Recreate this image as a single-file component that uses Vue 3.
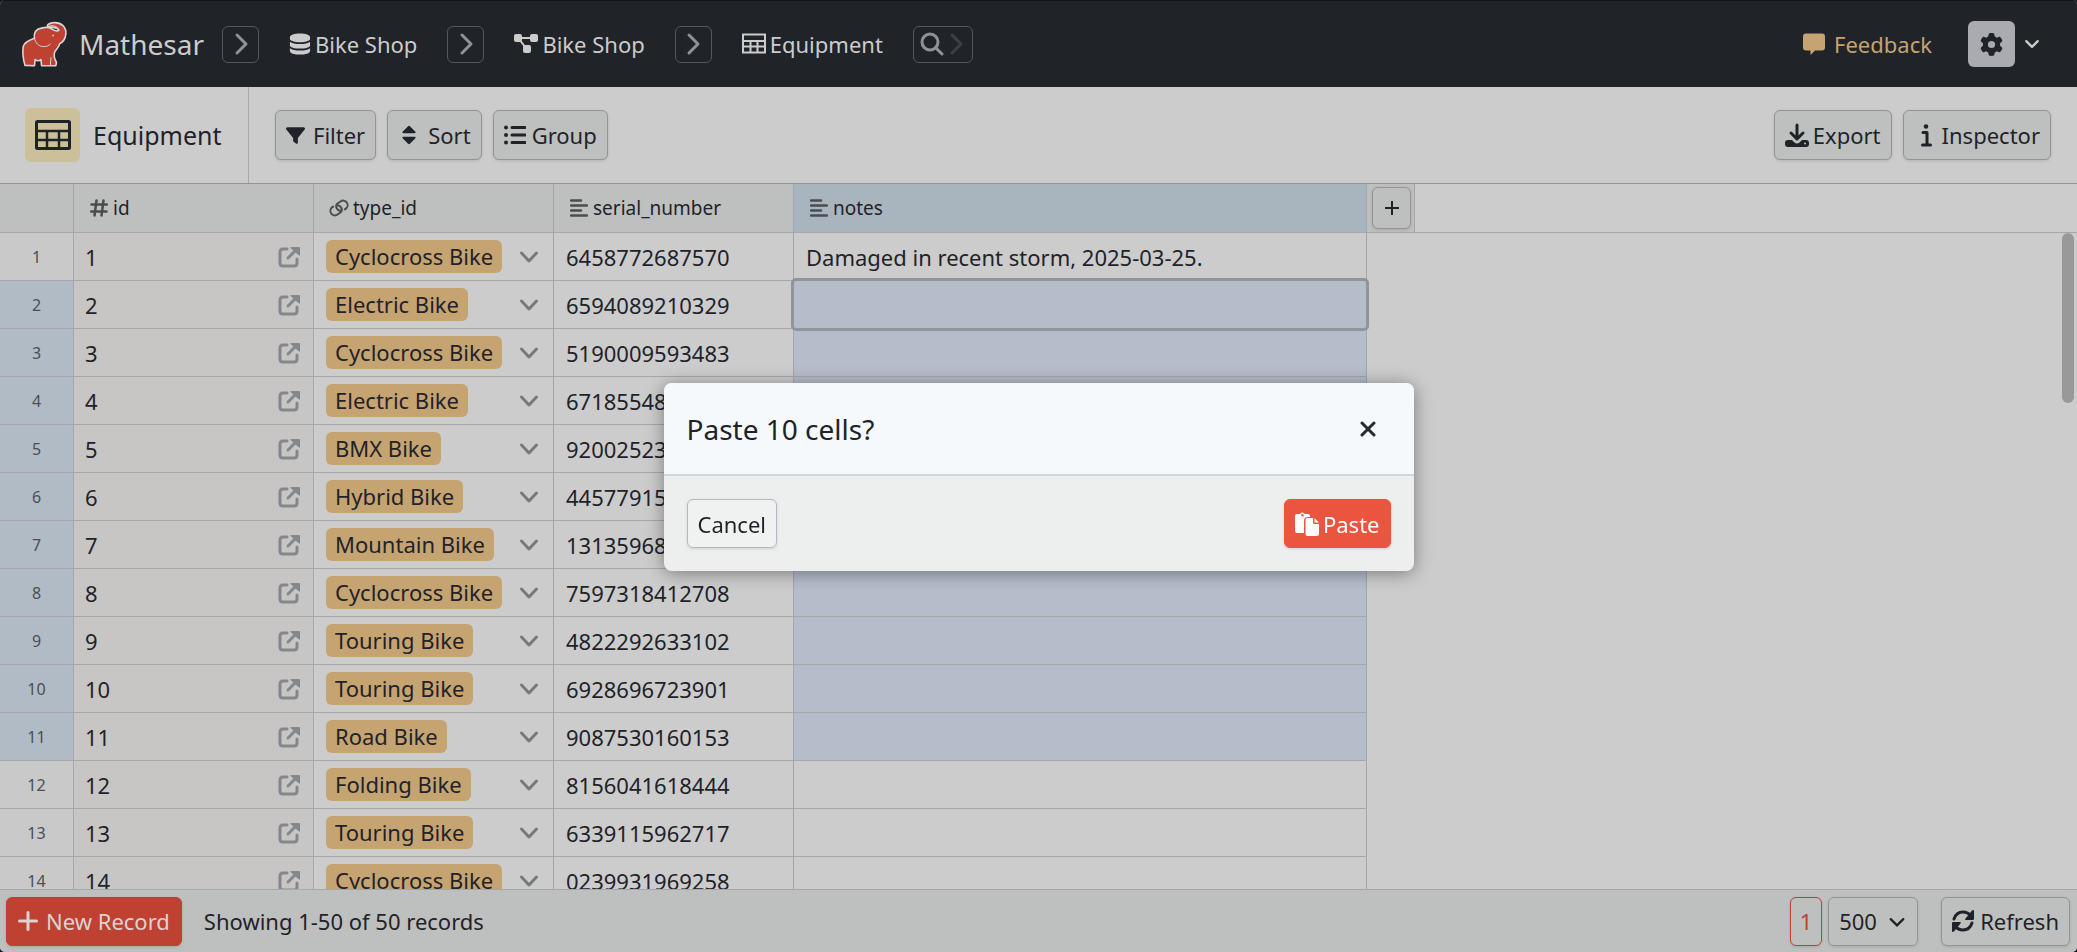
<script setup>
import { ref } from 'vue'

const types = [
  'Cyclocross Bike', 'Electric Bike', 'Cyclocross Bike', 'Electric Bike', 'BMX Bike',
  'Hybrid Bike', 'Mountain Bike', 'Cyclocross Bike', 'Touring Bike', 'Touring Bike',
  'Road Bike', 'Folding Bike', 'Touring Bike', 'Cyclocross Bike',
]
const serials = [
  '6458772687570', '6594089210329', '5190009593483', '6718554819203', '9200252317460',
  '4457791583216', '1313596840275', '7597318412708', '4822292633102', '6928696723901',
  '9087530160153', '8156041618444', '6339115962717', '0239931969258',
]
const rows = types.map((type, i) => ({
  id: i + 1,
  type,
  serial: serials[i],
  notes: i === 0 ? 'Damaged in recent storm, 2025-03-25.' : '',
  selected: i >= 1 && i <= 10,
  active: i === 1,
}))
const pageSize = ref('500')
</script>

<template>
  <div class="app">
    <header class="topbar">
      <a class="brand" href="#">
        <svg class="logo" viewBox="34 30 144 142" aria-hidden="true">
          <path d="M46 167C41 152 38 130 40 110C43 96 57 89 75 83C72 66 80 54 96 52C108 49 120 49 128 54C136 60 147 63 150 58C148 48 128 50 116 47C112 41 122 36 135 35C158 34 174 49 172 70C170 87 162 96 153 100C151 109 145 116 138 124C134 134 136 146 143 158L141 168H97L95 149C90 153 82 153 77 149L75 168Z" fill="#be4132" stroke="#d6d6d6" stroke-width="5" stroke-linejoin="round" />
          <path d="M75 83C78 98 88 108 101 109C113 110 122 105 124 101M120 46C133 41 148 47 151 59M126 143L124 167" fill="none" stroke="#d6d6d6" stroke-width="3" stroke-linecap="round" />
          <path d="M129 75l7-4-3 8z" fill="#e8e8e8" />
        </svg>
        <span>Mathesar</span>
      </a>
      <button class="crumb-btn" aria-label="Choose database">
        <svg viewBox="0 0 20 24"><path d="M6 3l9 9-9 9" /></svg>
      </button>
      <a class="crumb" href="#">
        <svg class="i22" viewBox="0 0 22 24" fill="currentColor" aria-hidden="true">
          <path d="M0 4.500C0 2 5 .500 11 .500S22 2 22 4.500v2C22 8.500 17 10 11 10S0 8.500 0 6.500zM0 9.500c2 1.700 6 2.500 11 2.500s9-.8 11-2.500v4c0 2-5 3.500-11 3.500S0 15.500 0 13.500zM0 16.500C2 18.200 6 19 11 19s9-.8 11-2.500v3c0 2.500-5 4-11 4s-11-1.500-11-4z" />
        </svg>
        Bike Shop
      </a>
      <button class="crumb-btn" aria-label="Choose schema">
        <svg viewBox="0 0 20 24"><path d="M6 3l9 9-9 9" /></svg>
      </button>
      <a class="crumb" href="#">
        <svg class="i24" viewBox="0 0 24 24" fill="currentColor" aria-hidden="true">
          <rect x="0" y="2" width="8" height="8" rx="2" /><rect x="16" y="2" width="8" height="8" rx="2" /><rect x="9" y="13" width="8" height="8" rx="2" />
          <path d="M6 6h12M5 7l7 9" stroke="currentColor" stroke-width="2" />
        </svg>
        Bike Shop
      </a>
      <button class="crumb-btn" aria-label="Choose table">
        <svg viewBox="0 0 20 24"><path d="M6 3l9 9-9 9" /></svg>
      </button>
      <a class="crumb" href="#">
        <svg class="i24" viewBox="0 0 24 24" fill="none" stroke="currentColor" stroke-width="2" aria-hidden="true">
          <path d="M1 2.500h22v18H1zM1 9h22M1 14.500h22M8.500 9v11M15.500 9v11" />
        </svg>
        Equipment
      </a>
      <button class="crumb-btn finder" aria-label="Find a record">
        <svg class="lens" viewBox="0 0 24 24"><circle cx="10" cy="10" r="8" /><path d="M16 16l6 6" /></svg>
        <svg class="dim" viewBox="0 0 20 24"><path d="M6 3l9 9-9 9" /></svg>
      </button>
      <span class="grow"></span>
      <a class="feedback" href="#">
        <svg class="i22" viewBox="0 0 22 22" fill="currentColor" aria-hidden="true">
          <path d="M3 .500h16a3 3 0 0 1 3 3v11a3 3 0 0 1-3 3h-7L7.500 22v-4.500H3a3 3 0 0 1-3-3v-11a3 3 0 0 1 3-3z" />
        </svg>
        Feedback
      </a>
      <button class="settings" aria-label="Settings">
        <span class="gear">
          <svg viewBox="0 0 512 512" fill="currentColor"><path d="M495.900 166.600c3.200 8.700 .5 18.400-6.400 24.600l-43.300 39.400c1.100 8.300 1.700 16.800 1.700 25.400s-.6 17.100-1.700 25.400l43.300 39.400c6.900 6.200 9.600 15.900 6.400 24.600c-4.400 11.900-9.700 23.300-15.800 34.300l-4.700 8.100c-6.600 11-14 21.400-22.100 31.200c-5.900 7.200-15.700 9.600-24.500 6.800l-55.700-17.700c-13.400 10.300-28.200 18.900-44 25.400l-12.500 57.100c-2 9.100-9 16.300-18.200 17.800c-13.800 2.300-28 3.500-42.500 3.500s-28.700-1.200-42.500-3.500c-9.200-1.500-16.200-8.700-18.200-17.800l-12.500-57.100c-15.800-6.500-30.600-15.100-44-25.400L83.100 425.900c-8.800 2.800-18.600 .3-24.500-6.800c-8.100-9.800-15.500-20.200-22.100-31.200l-4.700-8.100c-6.100-11-11.400-22.400-15.800-34.300c-3.200-8.700-.5-18.400 6.400-24.600l43.300-39.400C64.600 273.100 64 264.600 64 256s.6-17.100 1.700-25.400L22.400 191.200c-6.900-6.200-9.600-15.900-6.400-24.600c4.400-11.900 9.700-23.300 15.800-34.300l4.700-8.100c6.600-11 14-21.400 22.100-31.200c5.900-7.200 15.700-9.600 24.500-6.800l55.700 17.700c13.400-10.300 28.200-18.900 44-25.400l12.500-57.100c2-9.100 9-16.300 18.200-17.800C227.300 1.200 241.500 0 256 0s28.700 1.200 42.500 3.500c9.200 1.500 16.200 8.700 18.200 17.800l12.500 57.100c15.800 6.500 30.600 15.100 44 25.400l55.700-17.700c8.800-2.800 18.600-.3 24.500 6.800c8.100 9.800 15.500 20.200 22.100 31.200l4.700 8.100c6.100 11 11.400 22.400 15.800 34.300zM256 336a80 80 0 1 0 0-160 80 80 0 1 0 0 160z" /></svg>
        </span>
        <svg class="caret" viewBox="0 0 14 14"><path d="M2 4.500l5 5 5-5" /></svg>
      </button>
    </header>

    <section class="toolbar">
      <div class="title">
        <span class="title-icon">
          <svg viewBox="0 0 36 30" fill="none" stroke="currentColor" aria-hidden="true">
            <rect x="1.500" y="1.500" width="33" height="27" rx="1" stroke-width="3" />
            <path d="M1 11h34M1 20h34M12 11v17M24 11v17" stroke-width="2.500" />
          </svg>
        </span>
        <h1>Equipment</h1>
      </div>
      <div class="group">
        <button class="btn">
          <svg class="i19" viewBox="0 0 512 512" fill="currentColor"><path d="M3.900 54.900C10.500 40.900 24.500 32 40 32l432 0c15.500 0 29.500 8.900 36.100 22.900s4.600 30.500-5.200 42.500L320 320.900 320 448c0 12.100-6.800 23.200-17.700 28.600s-23.800 4.300-33.500-3l-64-48c-8.100-6-12.800-15.500-12.800-25.600l0-79.100L9 97.300C-.7 85.400-2.800 68.800 3.900 54.900z" /></svg>
          Filter
        </button>
        <button class="btn">
          <svg class="i22" viewBox="0 0 22 24" fill="currentColor"><path d="M10 2.500q1-1 2 0l6 6q1 1.500-1 1.500H5q-2 0-1-1.500zM5 14h12q2 0 1 1.500l-6 6q-1 1-2 0l-6-6Q3 14 5 14z" /></svg>
          Sort
        </button>
        <button class="btn snug">
          <svg class="i22" viewBox="0 0 22 20"><g fill="currentColor"><circle cx="2" cy="2.500" r="2" /><circle cx="2" cy="10" r="2" /><circle cx="2" cy="17.500" r="2" /></g><path d="M8 2.500h13M8 10h13M8 17.500h13" stroke="currentColor" stroke-width="3" stroke-linecap="round" /></svg>
          Group
        </button>
      </div>
      <span class="grow"></span>
      <div class="group">
        <button class="btn tight">
          <svg class="i24" viewBox="0 0 24 24"><path d="M12 2v12M6 10l6 6 6-6" fill="none" stroke="currentColor" stroke-width="3" stroke-linecap="round" stroke-linejoin="round" /><path fill="currentColor" fill-rule="evenodd" d="M3 17h4l2.500 2.500q2.500 2 5 0L17 17h4q3 0 3 3v1q0 3-3 3H3q-3 0-3-3v-1q0-3 3-3zM20 19.500a1 1 0 1 0 0 2 1 1 0 0 0 0-2z" /></svg>
          Export
        </button>
        <button class="btn tight">
          <svg class="i24" viewBox="0 0 24 24"><circle cx="12" cy="3.500" r="2.300" fill="currentColor" /><path d="M9 9.500h4v12M8.500 22h8" fill="none" stroke="currentColor" stroke-width="3" stroke-linecap="round" stroke-linejoin="round" /></svg>
          Inspector
        </button>
      </div>
    </section>

    <main class="sheet">
      <table>
        <colgroup>
          <col class="c-num" /><col class="c-std" /><col class="c-std" /><col class="c-std" /><col class="c-notes" /><col class="c-add" /><col />
        </colgroup>
        <thead>
          <tr>
            <th aria-label="Row"></th>
            <th><span class="col"><svg viewBox="0 0 18 18"><path d="M6.500 1.500l-2 15M13.500 1.500l-2 15M1.500 5.500h15.500M1 12.500h15.500" stroke-width="2.500" /></svg>id</span></th>
            <th><span class="col link"><svg viewBox="0 0 18 18"><g transform="rotate(-35 9 9)" stroke-width="2"><path d="M9.500 12.500C6 11 6 5.500 10 4.500h4a4.500 4.500 0 0 1 0 9h-1" /><path d="M8.500 5.500C12 7 12 12.500 8 13.500H4a4.500 4.500 0 0 1 0-9h1" /></g></svg>type_id</span></th>
            <th><span class="col"><svg viewBox="0 0 18 18"><path d="M1 1.500h10M1 6.500h16M1 11.500h10M1 16.500h16" stroke-width="2.500" /></svg>serial_number</span></th>
            <th class="hl"><span class="col"><svg viewBox="0 0 18 18"><path d="M1 1.500h10M1 6.500h16M1 11.500h10M1 16.500h16" stroke-width="2.500" /></svg>notes</span></th>
            <th class="add"><button aria-label="Add column"><svg viewBox="0 0 16 16"><path d="M8 1v14M1 8h14" /></svg></button></th>
            <th class="rest"></th>
          </tr>
        </thead>
        <tbody>
          <tr v-for="row in rows" :key="row.id" :class="{ selected: row.selected, active: row.active }">
            <th scope="row">{{ row.id }}</th>
            <td class="pk">
              <span class="cell">{{ row.id }}
                <a href="#" :aria-label="'Open record ' + row.id">
                  <svg viewBox="0 0 22 22"><path d="M9 3H5Q2 3 2 6v11q0 3 3 3h11q3 0 3-3v-4" fill="none" stroke="currentColor" stroke-width="3" stroke-linecap="round" /><path d="M10 12l7-7" stroke="currentColor" stroke-width="3" stroke-linecap="round" /><path d="M13 1h8q1 0 1 1v7q0 1-1 .5L12.500 2Q12 1 13 1z" fill="currentColor" /></svg>
                </a>
              </span>
            </td>
            <td class="fk">
              <span class="cell"><span class="tag">{{ row.type }}</span>
                <svg viewBox="0 0 18 12" aria-hidden="true"><path d="M1.500 2l7.500 8 7.500-8" /></svg>
              </span>
            </td>
            <td>{{ row.serial }}</td>
            <td class="notes">{{ row.notes }}</td>
          </tr>
        </tbody>
      </table>
      <span class="thumb"></span>
    </main>

    <footer class="status">
      <button class="btn primary">
        <svg class="i20" viewBox="0 0 20 20"><path d="M10 1.500v17M1.500 10h17" stroke="currentColor" stroke-width="3" stroke-linecap="round" /></svg>
        New Record
      </button>
      <span class="count">Showing 1-50 of 50 records</span>
      <span class="grow"></span>
      <button class="btn page">1</button>
      <span class="size">
        <select v-model="pageSize" aria-label="Records per page">
          <option>500</option>
          <option>100</option>
        </select>
        <svg viewBox="0 0 14 14" aria-hidden="true"><path d="M1.500 4.500L7 10l5.500-5.500" /></svg>
      </span>
      <button class="btn snug">
        <svg class="i22" viewBox="0 0 22 22"><path d="M2 9C3.500 4.500 7 2 11 2c3.500 0 6 1.500 8 4M20 13c-1.500 4.500-5 7-9 7-3.500 0-6-1.500-8-4" fill="none" stroke="currentColor" stroke-width="3" stroke-linecap="round" /><path d="M22 1v8q0 1-1 1h-7q-1.500 0-.5-1.500L20 .5q2-1 2 .5zM0 21v-8q0-1 1-1h7q1.500 0 .5 1.500L2 21.500q-2 1-2-.5z" fill="currentColor" /></svg>
        Refresh
      </button>
    </footer>

    <div class="backdrop">
      <section class="modal" role="dialog" aria-modal="true" aria-labelledby="dlg-title">
        <header>
          <h2 id="dlg-title">Paste 10 cells?</h2>
          <button class="close" aria-label="Close"><svg viewBox="0 0 16 16"><path d="M2 2l12 12M14 2L2 14" /></svg></button>
        </header>
        <div class="actions">
          <button class="btn cancel">Cancel</button>
          <button class="btn tight paste">
            <svg class="i24" viewBox="0 0 24 24" fill="currentColor"><path fill-rule="evenodd" d="M2 2h3q2-3 5 0h3q2 0 2 2v1h-2q-4 0-4 4v12H2q-2 0-2-2V4q0-2 2-2zM7.500 2a1.300 1.300 0 1 0 0 2.600 1.300 1.300 0 0 0 0-2.600z" /><path d="M12.500 6H18v4.500q0 1.500 1.500 1.500H24v10q0 2-2 2h-9.500q-2 0-2-2V8q0-2 2-2zM19.500 6l4.500 4.500h-4.500z" /></svg>
            Paste
          </button>
        </div>
      </section>
    </div>
  </div>
</template>

<style>
body { background: #131519; }
</style>

<style scoped>
* { box-sizing: border-box; }
.app {
  height: 100vh;
  display: flex;
  flex-direction: column;
  overflow: hidden;
  border-radius: 5px;
  background: #ccc;
  color: #1f2329;
  font: 22px/28px "Noto Sans", sans-serif;
}
button, select { font: inherit; color: inherit; margin: 0; }
a { color: inherit; text-decoration: none; }
svg { display: block; flex: none; }
h1, h2 { margin: 0; font-weight: 400; }
.grow { flex: 1; }
.i19 { width: 19px; height: 19px; }
.i20 { width: 20px; height: 20px; }
.i22 { width: 22px; height: 22px; }
.i24 { width: 24px; height: 24px; }

.topbar {
  height: 87px;
  flex: none;
  display: flex;
  align-items: center;
  padding: 0 37px 0 21px;
  background: #202328;
  border-top: 1px solid #131519;
  color: #ccc;
}
.brand { display: flex; align-items: center; gap: 11px; font-size: 28px; width: 201px; }
.logo { width: 47px; height: 46px; }
.crumb-btn {
  width: 37px;
  height: 37px;
  flex: none;
  display: flex;
  align-items: center;
  justify-content: center;
  padding: 0;
  border: 1px solid #54575f;
  border-radius: 6px;
  background: none;
}
.crumb-btn svg { width: 20px; height: 24px; fill: none; stroke: #8f9298; stroke-width: 3; stroke-linecap: round; stroke-linejoin: round; }
.crumb-btn .lens { width: 24px; height: 24px; }
.crumb-btn .dim { stroke: #3d4046; }
.finder { width: 60px; gap: 2px; }
.crumb { display: flex; align-items: center; gap: 4px; margin: 0 30px; }
.feedback { display: flex; align-items: center; gap: 9px; color: #c5a471; margin-right: 36px; }
.settings { display: flex; align-items: center; gap: 9px; padding: 0; border: 0; background: none; }
.gear { width: 47px; height: 46px; display: grid; place-items: center; border-radius: 6px; background: #a9abb0; color: #202328; }
.gear svg { width: 23px; height: 23px; }
.caret { width: 16px; height: 16px; fill: none; stroke: #ccc; stroke-width: 2; stroke-linecap: round; stroke-linejoin: round; }

.toolbar { height: 97px; flex: none; display: flex; align-items: center; border-bottom: 1px solid #919499; padding-right: 26px; }
.title { align-self: stretch; display: flex; align-items: center; gap: 13px; width: 249px; padding-left: 25px; border-right: 1px solid #a6a8ad; }
.title-icon { width: 55px; height: 54px; display: grid; place-items: center; border-radius: 6px; background: #ccc09a; }
.title-icon svg { width: 36px; height: 30px; }
h1 { font-size: 25px; line-height: 32px; }
.group { display: flex; gap: 11px; padding-left: 26px; }
.btn {
  height: 50px;
  display: flex;
  align-items: center;
  justify-content: center;
  gap: 8px;
  padding: 0 10px;
  border: 1px solid #919499;
  border-radius: 6px;
  background: #bec0bf;
  white-space: nowrap;
  box-shadow: 0 1px 3px rgba(0, 0, 0, 0.12);
}
.snug { gap: 6px; }
.tight { gap: 4px; }

.sheet { flex: 1; min-height: 0; overflow: hidden; position: relative; }
table { width: 100%; table-layout: fixed; border-collapse: separate; border-spacing: 0; }
.c-num { width: 74px; }
.c-std { width: 240px; }
.c-notes { width: 573px; }
.c-add { width: 48px; }
th, td { padding: 0; border-right: 1px solid #a6a7ac; border-bottom: 1px solid #a6a7ac; font-weight: 400; text-align: left; white-space: nowrap; }
thead th { height: 49px; background: #bec0bf; font-size: 19px; line-height: 24px; }
thead th.hl { background: #a9b5be; }
thead th.rest { background: none; border-right: 0; }
.col { display: flex; align-items: center; gap: 5px; padding-left: 16px; }
.col svg { width: 18px; height: 18px; fill: none; stroke: #4a4c50; stroke-linecap: round; }
.link svg { overflow: visible; }
.add button { width: 39px; height: 42px; margin-left: 5px; display: grid; place-items: center; padding: 0; border: 1px solid #919499; border-radius: 6px; background: #bec0bf; box-shadow: 0 1px 3px rgba(0, 0, 0, 0.12); }
.add svg { width: 16px; height: 16px; stroke: #1f2329; stroke-width: 2; }
tbody th { height: 48px; background: #c9c9c9; text-align: center; font-size: 16px; line-height: 20px; color: #4a4e57; }
tbody td { padding-left: 12px; }
tbody td.pk { background: #c8c6c4; padding-left: 11px; }
.cell { display: flex; align-items: center; justify-content: space-between; }
.pk a { margin-right: 13px; color: #85878c; }
.pk svg { width: 22px; height: 22px; }
.tag { padding: 0 9px; line-height: 33px; border-radius: 6px; background: #c5a471; }
.fk svg { width: 18px; height: 12px; margin-right: 15px; fill: none; stroke: #76797f; stroke-width: 3; stroke-linecap: round; stroke-linejoin: round; }
.selected th { background: #b1bbc6; }
.selected .notes { background: #b6bdca; }
.active .notes { position: relative; }
.active .notes::after { content: ""; position: absolute; inset: -3px; border: 3px solid #919499; border-radius: 5px; }
.thumb { position: absolute; right: 3px; top: 49px; width: 12px; height: 170px; border-radius: 6px; background: #999; }

.status { height: 63px; flex: none; display: flex; align-items: center; padding: 0 7px 0 6px; border-top: 1px solid #a6a7ac; background: #bec0bf; }
.status .btn { height: 49px; }
.primary { background: #be4132; border-color: #be4132; color: #ddd2d0; padding: 0 11px; }
.count { margin-left: 22px; }
.page { width: 32px; border-color: #be4132; color: #be4132; }
.size { position: relative; margin: 0 23px 0 6px; }
select { appearance: none; display: block; width: 90px; height: 49px; padding: 0 10px; border: 1px solid #919499; border-radius: 6px; background: none; box-shadow: 0 1px 3px rgba(0, 0, 0, 0.12); }
.size svg { position: absolute; right: 13px; top: 17px; width: 16px; height: 16px; fill: none; stroke: #1f2329; stroke-width: 2; stroke-linecap: round; pointer-events: none; }

.backdrop { position: fixed; inset: 0; display: flex; align-items: center; justify-content: center; padding-top: 2px; }
.modal { width: 750px; max-width: 100%; border-radius: 8px; overflow: hidden; background: #edefee; box-shadow: 0 2px 18px rgba(0, 0, 0, 0.4); }
.modal header { height: 93px; display: flex; align-items: center; justify-content: space-between; padding: 0 30px 0 23px; border-bottom: 2px solid #d1d6d9; background: #f5f9fb; }
h2 { font-size: 28px; line-height: 36px; }
.close { width: 32px; height: 32px; display: grid; place-items: center; padding: 0; border: 0; background: none; }
.close svg { width: 16px; height: 16px; stroke: #262a30; stroke-width: 3; stroke-linecap: round; }
.actions { display: flex; justify-content: space-between; padding: 23px; }
.actions .btn { height: 49px; }
.cancel { background: #f0f2f1; border-color: #b5b8c1; }
.paste { background: #eb5540; border-color: #eb5540; color: #fff; }
</style>
